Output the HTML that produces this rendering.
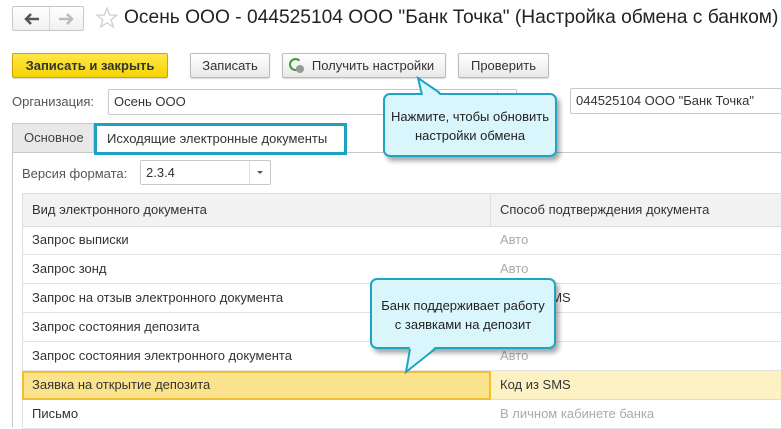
<!DOCTYPE html>
<html><head><meta charset="utf-8"><style>
*{box-sizing:border-box;margin:0;padding:0}
body{width:781px;height:427px;overflow:hidden;background:#fff;font-family:"Liberation Sans",Arial,sans-serif;font-size:13px;color:#333;position:relative}
.a{position:absolute}
.btn{position:absolute;top:53px;height:25px;border:1px solid #bbb;border-radius:2px;background:linear-gradient(#fff,#e9e9e9);text-align:center;line-height:23px;color:#333;box-shadow:0 1px 1px rgba(0,0,0,.15)}
.inp{position:absolute;border:1px solid #c8c8c8;border-radius:2px;background:#fff;padding-left:5px;line-height:24px;height:26px}
.row{position:absolute;left:22px;right:0;height:29px;border-bottom:1px solid #e2e2e2;line-height:28px}
.row span{position:absolute;left:10px}
.row b{position:absolute;left:478px;font-weight:normal;color:#aaa}
.call{position:absolute;background:#d9f6fc;border:2px solid #1ea5c4;border-radius:7px;box-shadow:3px 4px 5px rgba(0,0,0,.35);text-align:center;color:#222;font-size:13px;line-height:19px}
</style></head><body>
<div class="a" style="left:12px;top:6px;width:72px;height:25px;border:1px solid #c8c8c8;border-radius:2px;background:linear-gradient(#fff,#f0f0f0)"></div>
<div class="a" style="left:49px;top:7px;width:1px;height:23px;background:#d8d8d8"></div>
<svg class="a" style="left:22px;top:11px" width="60" height="16"><path d="M4 8H17M9 3L4 8L9 13" fill="none" stroke="#555" stroke-width="2.5"/><path d="M37 8H50M45 3L50 8L45 13" fill="none" stroke="#bbb" stroke-width="2.5"/></svg>
<svg class="a" style="left:96px;top:7px" width="22" height="22"><polygon points="11,1 13.6,8 21,8.2 15.2,12.8 17.3,20 11,15.8 4.7,20 6.8,12.8 1,8.2 8.4,8" fill="none" stroke="#ccc" stroke-width="1.2"/></svg>
<div class="a" style="left:124px;top:7px;font-size:19.2px;color:#222;white-space:nowrap">Осень ООО - 044525104 ООО "Банк Точка" (Настройка обмена с банком)</div>

<div class="btn" style="left:12px;width:156px;background:linear-gradient(#ffe74a,#f5d400);border-color:#c9a800;font-weight:bold;color:#333">Записать и закрыть</div>
<div class="btn" style="left:190px;width:80px">Записать</div>
<div class="btn" style="left:282px;width:164px;padding-left:18px">Получить настройки</div>
<div class="a" style="left:289px;top:58px;width:13px;height:13px;border:2px solid #3a9c3a;border-radius:50%;border-right-color:transparent"></div>
<div class="a" style="left:296px;top:65px;width:8px;height:8px;border-radius:50%;background:#999"></div>
<div class="btn" style="left:458px;width:91px">Проверить</div>

<div class="a" style="left:12px;top:94px;color:#555">Организация:</div>
<div class="inp" style="left:108px;top:89px;width:409px">Осень ООО</div>
<div class="a" style="left:497px;top:90px;width:1px;height:24px;background:#ddd"></div>
<div class="inp" style="left:570px;top:88px;width:215px;color:#333">044525104 ООО "Банк Точка"</div>

<div class="a" style="left:12px;top:123px;width:82px;height:30px;border:1px solid #ccc;background:#e8e8e8;line-height:28px;padding-left:11px;color:#444">Основное</div>
<div class="a" style="left:12px;top:152px;width:769px;height:1px;background:#c8c8c8"></div>
<div class="a" style="left:12px;top:152px;width:1px;height:275px;background:#c8c8c8"></div>
<div class="a" style="left:94px;top:123px;width:253px;height:32px;border:3px solid #1ba3c1;background:#fff;line-height:25px;padding-left:10px;color:#333">Исходящие электронные документы</div>

<div class="a" style="left:22px;top:166px;color:#555">Версия формата:</div>
<div class="inp" style="left:140px;top:160px;width:131px;height:25px;line-height:23px">2.3.4</div>
<div class="a" style="left:249px;top:161px;width:1px;height:23px;background:#ddd"></div>
<div class="a" style="left:257px;top:171px;border:3px solid transparent;border-top:3px solid #555"></div>

<div class="a" style="left:22px;top:193px;right:0;height:34px;background:#f2f2f2;border:1px solid #ddd;border-right:none"></div>
<div class="a" style="left:32px;top:202px">Вид электронного документа</div>
<div class="a" style="left:490px;top:193px;width:1px;height:34px;background:#ddd"></div>
<div class="a" style="left:500px;top:202px">Способ подтверждения документа</div>
<div class="a" style="left:22px;top:193px;width:1px;height:234px;background:#ddd"></div>

<div class="row" style="top:226px"><span>Запрос выписки</span><b>Авто</b></div>
<div class="row" style="top:255px"><span>Запрос зонд</span><b>Авто</b></div>
<div class="row" style="top:284px"><span>Запрос на отзыв электронного документа</span><b style="color:#333">Код из SMS</b></div>
<div class="row" style="top:313px"><span>Запрос состояния депозита</span><b>Авто</b></div>
<div class="row" style="top:342px"><span>Запрос состояния электронного документа</span><b>Авто</b></div>
<div class="row" style="top:371px;background:#fdf2c4;border-bottom-color:#f0e0a0"></div>
<div class="a" style="left:22px;top:371px;width:469px;height:29px;background:#fbe38e;border:2px solid #f0c030"></div>
<div class="a" style="left:32px;top:377px">Заявка на открытие депозита</div>
<div class="a" style="left:500px;top:377px">Код из SMS</div>
<div class="row" style="top:400px"><span>Письмо</span><b>В личном кабинете банка</b></div>

<div class="call" style="left:383px;top:93px;width:174px;height:64px;padding-top:12px">Нажмите, чтобы обновить<br>настройки обмена</div>
<svg class="a" style="left:400px;top:76px" width="50" height="22"><polygon points="18,2 22,19 40,19" fill="#d9f6fc"/><polyline points="22,19 18,2 40,17" fill="none" stroke="#1ea5c4" stroke-width="2"/></svg>

<div class="call" style="left:370px;top:278px;width:186px;height:71px;padding-top:16px">Банк поддерживает работу<br>с заявками на депозит</div>
<svg class="a" style="left:398px;top:346px" width="45" height="30"><polygon points="12,1 8,26 37,1" fill="#d9f6fc"/><polyline points="12,3 8,26 37,3" fill="none" stroke="#1ea5c4" stroke-width="2"/></svg>
</body></html>
